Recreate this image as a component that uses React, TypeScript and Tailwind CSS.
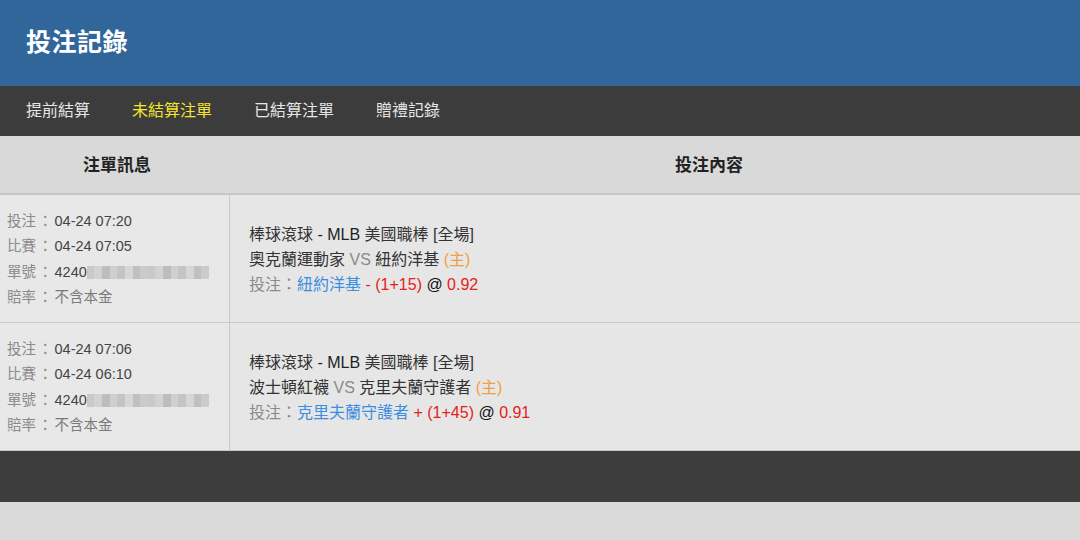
import React from 'react'

const font = { fontFamily: '"Liberation Sans", "Noto Sans CJK TC", sans-serif' }

type Bet = {
  placed: string
  match: string
  home: string
  away: string
  pick: string
  line: string
  odds: string
}

const bets: Bet[] = [
  {
    placed: '04-24 07:20',
    match: '04-24 07:05',
    home: '奧克蘭運動家',
    away: '紐約洋基',
    pick: '紐約洋基',
    line: '- (1+15)',
    odds: '0.92',
  },
  {
    placed: '04-24 07:06',
    match: '04-24 06:10',
    home: '波士頓紅襪',
    away: '克里夫蘭守護者',
    pick: '克里夫蘭守護者',
    line: '+ (1+45)',
    odds: '0.91',
  },
]

function Blurred() {
  const shades = ['bg-[#c9c9c9]', 'bg-[#d2d2d2]', 'bg-[#bdbdbd]', 'bg-[#cfcfcf]', 'bg-[#c4c4c4]', 'bg-[#d6d6d6]', 'bg-[#c0c0c0]', 'bg-[#cbcbcb]']
  return (
    <span className="inline-flex h-[13px] w-[122px] overflow-hidden blur-[0.6px] align-middle">
      {shades.concat(shades).map((s, i) => (
        <span key={i} className={`h-full flex-1 ${s}`} />
      ))}
    </span>
  )
}

function Label({ children }: { children: string }) {
  return (
    <span className="text-[#8a8a8a]">
      {children}
      <span className="mx-[2px]">：</span>
    </span>
  )
}

function BetRow({ bet }: { bet: Bet }) {
  return (
    <div className="flex h-[128px] border-b border-[#c9c9c9] bg-[#e6e6e6]">
      <div className="flex w-[230px] shrink-0 flex-col justify-center border-r border-[#c9c9c9] bg-[#e8e8e8] pl-[7px] pt-[2px] text-[14.5px] leading-[25.5px]">
        <div>
          <Label>投注</Label>
          <span className="text-[#444]">{bet.placed}</span>
        </div>
        <div>
          <Label>比賽</Label>
          <span className="text-[#444]">{bet.match}</span>
        </div>
        <div className="flex items-center">
          <Label>單號</Label>
          <span className="text-[#444]">4240</span>
          <Blurred />
        </div>
        <div>
          <Label>賠率</Label>
          <span className="text-[#7a7a7a]">不含本金</span>
        </div>
      </div>
      <div className="flex flex-1 flex-col justify-center pl-[19px] pt-[2px] text-[16px] leading-[25px]">
        <div className="text-[#222]">
          <span className="text-[#333]">棒球滾球 </span>
          <span>- MLB </span>
          <span className="text-[#333]">美國職棒 [全場]</span>
        </div>
        <div className="text-[#333]">
          {bet.home} <span className="text-[#8a8a8a]">VS</span> {bet.away}{' '}
          <span className="text-[#f0a040]">(主)</span>
        </div>
        <div>
          <span className="text-[#8a8a8a]">投注：</span>
          <span className="text-[#3c8ee0]">{bet.pick}</span>{' '}
          <span className="text-[#e2231a]">{bet.line}</span>{' '}
          <span className="text-[#111]">@</span>{' '}
          <span className="text-[#e2231a]">{bet.odds}</span>
        </div>
      </div>
    </div>
  )
}

export default function App() {
  const tabs = ['提前結算', '未結算注單', '已結算注單', '贈禮記錄']
  return (
    <div className="h-[540px] w-[1080px] overflow-hidden bg-[#dcdcdc]" style={font}>
      <div className="flex h-[86px] items-center bg-[#30669a] pl-[26px]">
        <h1 className="text-[25px] font-bold tracking-[0.5px] text-white">投注記錄</h1>
      </div>
      <nav className="flex h-[50px] items-center gap-[42px] bg-[#3c3c3c] pl-[26px] text-[16px]">
        {tabs.map((t, i) => (
          <span key={t} className={i === 1 ? 'text-[#f5e52c]' : 'text-[#e6e6e6]'}>
            {t}
          </span>
        ))}
      </nav>
      <div className="flex h-[59px] border-b-2 border-[#c6c6c6] bg-[#d9d9d9] pt-[3px] text-[17px] font-bold text-[#222]">
        <div className="flex w-[230px] items-center justify-center pl-[4px]">注單訊息</div>
        <div className="flex flex-1 items-center pl-[445px]">投注內容</div>
      </div>
      {bets.map((b) => (
        <BetRow key={b.placed} bet={b} />
      ))}
      <div className="h-[51px] bg-[#3d3d3d]" />
      <div className="h-[38px] bg-[#dadada]" />
    </div>
  )
}
